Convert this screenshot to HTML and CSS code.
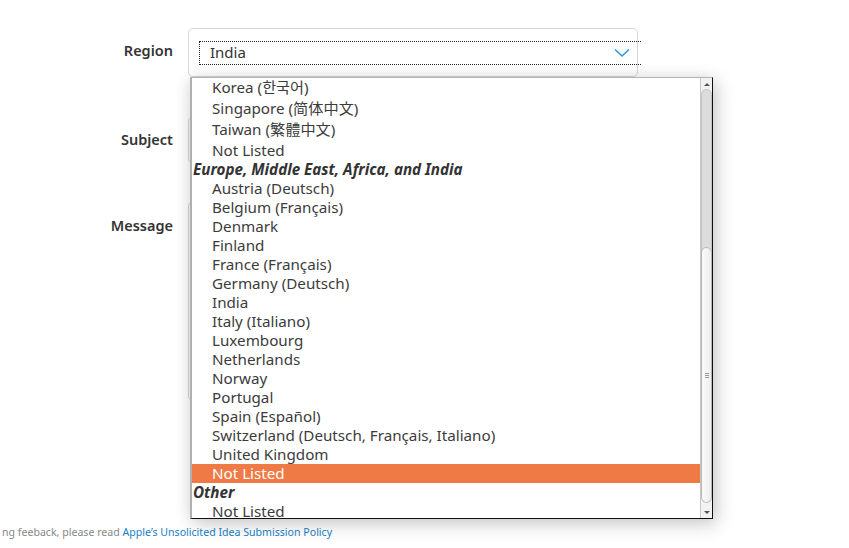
FILE: index.html
```html
<!DOCTYPE html>
<html lang="en">
<head>
<meta charset="utf-8">
<title>Feedback</title>
<link rel="stylesheet" href="styles.css">
</head>
<body>
<div class="page">
  <div class="form">
    <div class="label label-region">Region</div>
    <div class="select">
      <div class="focus">India</div>
      <svg class="chev" width="16" height="10" viewBox="0 0 16 10"><polyline points="1,1.5 8,8 15,1.5" fill="none" stroke="#2a9ad9" stroke-width="1.6"/></svg>
    </div>
    <div class="label label-subject">Subject</div>
    <div class="input"></div>
    <div class="label label-message">Message</div>
    <div class="textarea"></div>
  </div>
  <p class="footer">ng feeback, please read <a class="link">Apple’s Unsolicited Idea Submission Policy</a></p>

  <div class="dropdown">
    <ul class="list">
      <li class="opt h20">Korea (한국어)</li>
      <li class="opt h21">Singapore (简体中文)</li>
      <li class="opt h22">Taiwan (繁體中文)</li>
      <li class="opt">Not Listed</li>
      <li class="group">Europe, Middle East, Africa, and India</li>
      <li class="opt">Austria (Deutsch)</li>
      <li class="opt">Belgium (Français)</li>
      <li class="opt">Denmark</li>
      <li class="opt">Finland</li>
      <li class="opt">France (Français)</li>
      <li class="opt">Germany (Deutsch)</li>
      <li class="opt">India</li>
      <li class="opt">Italy (Italiano)</li>
      <li class="opt">Luxembourg</li>
      <li class="opt">Netherlands</li>
      <li class="opt">Norway</li>
      <li class="opt">Portugal</li>
      <li class="opt">Spain (Español)</li>
      <li class="opt">Switzerland (Deutsch, Français, Italiano)</li>
      <li class="opt">United Kingdom</li>
      <li class="opt selected">Not Listed</li>
      <li class="group">Other</li>
      <li class="opt">Not Listed</li>
    </ul>
    <div class="scrollbar">
      <div class="sb-btn sb-up"><span class="tri-up"></span></div>
      <div class="sb-track"></div>
      <div class="sb-thumb"><span class="grip"></span></div>
      <div class="sb-btn sb-down"><span class="tri-down"></span></div>
    </div>
  </div>
</div>
</body>
</html>
```
FILE: styles.css
```css
* { box-sizing: border-box; }
html, body { margin: 0; padding: 0; background: #fff; }
body {
  font-family: "Noto Sans", "Open Sans", "Noto Sans CJK KR", sans-serif;
  color: #333;
  width: 849px;
  height: 548px;
  overflow: hidden;
}
.page { position: relative; padding-top: 28px; height: 548px; }
.form {
  display: grid;
  grid-template-columns: 188px 450px;
  grid-template-rows: 49px 88px 236px;
  row-gap: 0;
}
.label {
  text-align: right;
  padding-right: 15px;
  font-size: 14.5px;
  font-weight: 600;
  color: #333;
}
.label-region { line-height: 45px; }
.label-subject { padding-top: 52px; line-height: 20px; }
.label-message { padding-top: 50px; line-height: 20px; }
.select {
  position: relative;
  border: 1px solid #d6d6d6;
  border-radius: 5px;
  height: 49px;
  padding-top: 12px;
  padding-left: 10px;
}
.focus {
  width: 442px;
  height: 24px;
  border-top: 1px dotted #222;
  border-bottom: 1px dotted #222;
  border-left: 1px dotted #222;
  font-size: 15px;
  line-height: 21px;
  padding-left: 10px;
  color: #333;
}
.chev { position: absolute; left: 425px; top: 19px; }
.input {
  margin-top: 39px;
  height: 48px;
  border: 1px solid #d6d6d6;
  border-radius: 5px;
}
.textarea {
  margin-top: 36px;
  height: 200px;
  border: 1px solid #d6d6d6;
  border-radius: 5px;
}
.footer {
  margin: 124px 0 0 2px;
  font-size: 10.6px;
  color: #888;
  line-height: 14px;
  white-space: nowrap;
}
.link { color: #1a7fc8; }

.dropdown {
  position: absolute;
  left: 190px;
  top: 77px;
  width: 523px;
  height: 442px;
  background: #fff;
  border-left: 2px solid #b0b0b0;
  border-top: 1px solid #b4b4b4;
  border-right: 1px solid #111;
  border-bottom: 1px solid #111;
  box-shadow: 4px 5px 18px rgba(0,0,0,0.2), -2px 0 14px rgba(0,0,0,0.06);
  display: flex;
  overflow: hidden;
}
.list {
  list-style: none;
  margin: 0;
  padding: 0;
  width: 508px;
  font-family: "Noto Sans", "Noto Sans CJK KR", sans-serif;
  font-size: 15.2px;
  color: #3c3c3c;
}
.opt, .group { height: 19px; line-height: 18px; white-space: nowrap; }
.opt { padding-left: 20px; }
.group { padding-left: 1px; font-weight: 700; font-style: italic; color: #333; }
.h20 { height: 20px; line-height: 19px; }
.h21 { height: 21px; line-height: 20px; }
.h22 { height: 22px; line-height: 21px; }
.selected { background: #f07a45; color: #fff; }

.scrollbar {
  position: relative;
  width: 12px;
  height: 440px;
  background: #f2f2f2;
  border-left: 1px solid #c8c8c8;
}
.sb-btn { position: absolute; left: 0; width: 11px; height: 12px; display: flex; align-items: center; justify-content: center; }
.sb-up { top: 0; }
.sb-down { bottom: 0; }
.tri-up { width: 0; height: 0; border-left: 3px solid transparent; border-right: 3px solid transparent; border-bottom: 3px solid #555; }
.tri-down { width: 0; height: 0; border-left: 3px solid transparent; border-right: 3px solid transparent; border-top: 3px solid #555; }
.sb-track {
  position: absolute; left: 0; top: 11px; width: 11px; height: 170px;
  background: #dcdcdc;
  border: 1px solid #c4c4c4;
  border-radius: 6px 6px 0 0;
}
.sb-thumb {
  position: absolute; left: 0; top: 169px; width: 11px; height: 256px;
  background: linear-gradient(to right, #fafafa, #eeeeee);
  border: 1px solid #b8b8b8;
  border-radius: 6px;
  display: flex; align-items: center; justify-content: center;
}
.grip {
  width: 4px; height: 5px;
  border-top: 1px solid #999; border-bottom: 1px solid #999;
  background: linear-gradient(#999, #999) center / 4px 1px no-repeat;
}
```
